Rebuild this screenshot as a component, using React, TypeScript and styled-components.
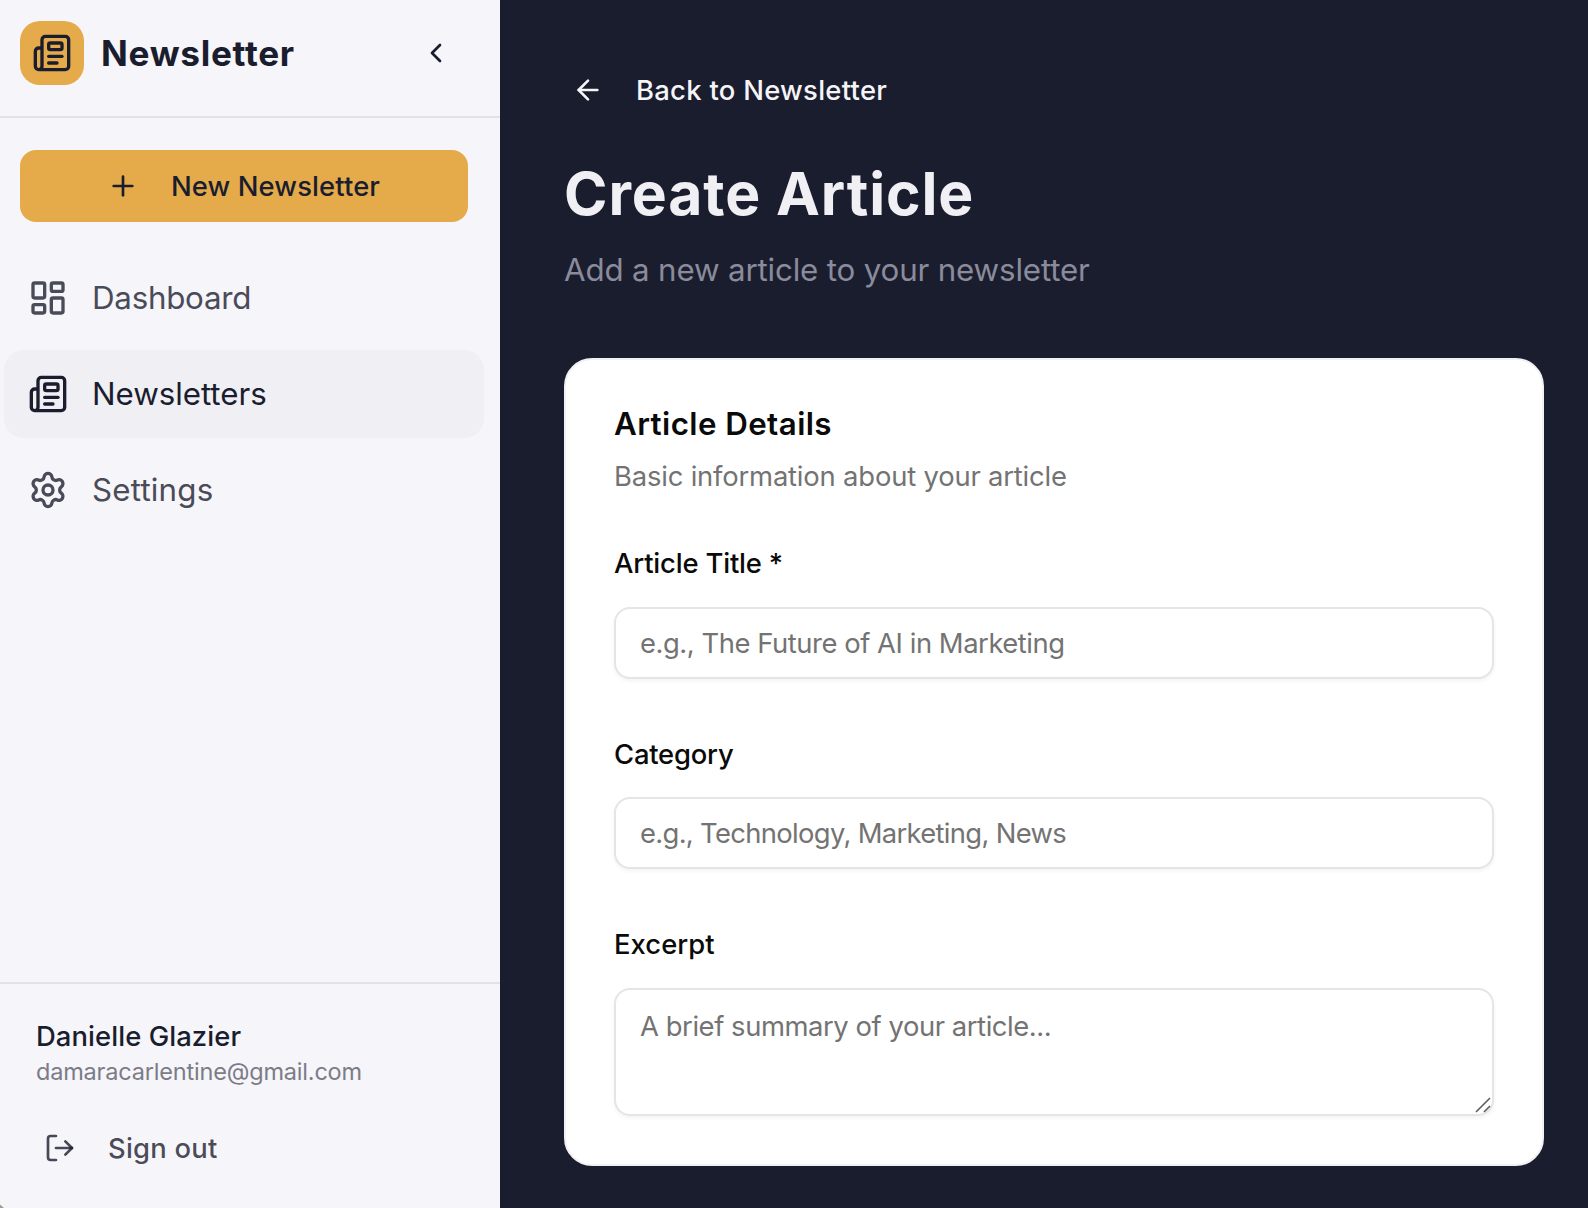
import React from 'react';
import styled, { createGlobalStyle } from 'styled-components';
import {
  ArrowLeft,
  ChevronLeft,
  LayoutDashboard,
  LogOut,
  Newspaper,
  Plus,
  Settings,
} from 'lucide-react';

const color = {
  navy: '#1a1d2e',
  gold: '#e5ab4a',
  sidebar: '#f6f5fa',
  active: '#f0eff4',
  line: '#e2e1e8',
  soft: 'rgba(26, 29, 46, 0.8)',
  faint: '#7b7c87',
};

const GlobalStyle = createGlobalStyle`
  *, *::before, *::after { box-sizing: border-box; }
  body {
    margin: 0;
    background: ${color.navy};
    font-family: Inter, "Liberation Sans", sans-serif;
    -webkit-font-smoothing: antialiased;
    overflow: hidden;
  }
  h1, h2, p { margin: 0; }
  button, input, textarea { font-family: inherit; }
`;

const Shell = styled.div`
  position: relative;
  display: flex;
  width: 1588px;
  height: 1208px;
  overflow: hidden;
  background: ${color.navy};
`;

const Sidebar = styled.aside`
  display: flex;
  flex-direction: column;
  flex: 0 0 500px;
  background: ${color.sidebar};
  color: ${color.navy};
`;

const SidebarHeader = styled.header`
  display: flex;
  align-items: center;
  height: 118px;
  padding: 21px 32px 31px 20px;
  border-bottom: 2px solid ${color.line};
`;

const Logo = styled.div`
  display: grid;
  place-items: center;
  width: 64px;
  height: 64px;
  border-radius: 20px;
  background: ${color.gold};
`;

const Brand = styled.span`
  flex: 1;
  margin-left: 17px;
  font-size: 35.2px;
  font-weight: 700;
  line-height: 56px;
  letter-spacing: 0.7px;
`;

const IconButton = styled.button`
  display: grid;
  place-items: center;
  width: 64px;
  height: 64px;
  padding: 0;
  border: 0;
  background: none;
  color: inherit;
`;

const NewButton = styled.button`
  display: flex;
  align-items: center;
  justify-content: center;
  gap: 32px;
  height: 72px;
  margin: 32px 32px 0 20px;
  padding: 0 1px 0 0;
  border: 0;
  border-radius: 16px;
  background: ${color.gold};
  color: ${color.navy};
  font-size: 27.4px;
  font-weight: 500;
  letter-spacing: 0.12px;
`;

const Nav = styled.nav`
  display: flex;
  flex-direction: column;
  flex: 1;
  gap: 8px;
  padding: 32px 16px 0 4px;
`;

const NavItem = styled.a<{ $active?: boolean; $track: number }>`
  display: flex;
  align-items: center;
  gap: 24px;
  height: 88px;
  padding: 0 24px;
  border-radius: 20px;
  background: ${(p) => (p.$active ? color.active : 'transparent')};
  color: ${(p) => (p.$active ? color.navy : '#4a4b58')};
  font-size: 31.3px;
  letter-spacing: ${(p) => p.$track}px;
`;

const Account = styled.footer`
  display: flex;
  flex-direction: column;
  height: 226px;
  padding: 32px 36px 0;
  border-top: 2px solid ${color.line};
`;

const AccountName = styled.p`
  font-size: 27.4px;
  font-weight: 500;
  line-height: 40px;
  letter-spacing: 0.08px;
`;

const AccountEmail = styled.p`
  color: ${color.faint};
  font-size: 23.5px;
  line-height: 32px;
  letter-spacing: -0.19px;
`;

const SignOut = styled.button`
  display: flex;
  align-items: center;
  gap: 32px;
  height: 64px;
  margin-top: 28px;
  padding: 0 8px;
  border: 0;
  background: none;
  color: ${color.soft};
  font-size: 27.4px;
  font-weight: 500;
  letter-spacing: 0.24px;
`;

const Main = styled.main`
  display: flex;
  flex-direction: column;
  flex: 1;
  padding: 54px 44px 0 64px;
`;

const BackLink = styled.a`
  display: flex;
  align-items: center;
  gap: 32px;
  height: 72px;
  padding-left: 8px;
  color: #f5f4f7;
  font-size: 27.4px;
  font-weight: 500;
  letter-spacing: 0.29px;
`;

const PageTitle = styled.h1`
  margin-top: 32px;
  color: #f0eff4;
  font-size: 58.8px;
  font-weight: 700;
  line-height: 72px;
  letter-spacing: 0.9px;
`;

const PageSubtitle = styled.p`
  margin-top: 16px;
  color: #8a8b9b;
  font-size: 31.3px;
  line-height: 48px;
  letter-spacing: -0.17px;
`;

const Card = styled.section`
  display: flex;
  flex-direction: column;
  margin-top: 64px;
  padding: 48px;
  border: 2px solid #f1f0f4;
  border-radius: 28px;
  background: #fff;
  color: #0a0a0a;
`;

const CardTitle = styled.h2`
  font-size: 31.3px;
  font-weight: 600;
  line-height: 32px;
  letter-spacing: 0.42px;
`;

const CardText = styled.p`
  margin: 16px 0 48px;
  color: #737373;
  font-size: 27.4px;
  line-height: 40px;
  letter-spacing: -0.18px;
`;

const Fields = styled.form`
  display: flex;
  flex-direction: column;
  gap: 56px;
`;

const Field = styled.div`
  position: relative;
  display: flex;
  flex-direction: column;
  gap: 24.6px;
`;

const Label = styled.label<{ $track: number }>`
  font-size: 27.4px;
  font-weight: 500;
  line-height: 38px;
  letter-spacing: ${(p) => p.$track}px;
`;

const Input = styled.input<{ $track: number }>`
  width: 100%;
  height: 72px;
  padding: 0 24px;
  border: 2px solid #e5e5e5;
  border-radius: 16px;
  outline: 0;
  background: #fff;
  box-shadow: 0 2px 4px rgba(0, 0, 0, 0.05);
  font-size: 27.4px;
  letter-spacing: ${(p) => p.$track}px;
  &::placeholder { color: #737373; opacity: 1; }
`;

const TextArea = styled.textarea`
  display: block;
  width: 100%;
  height: 128px;
  padding: 16px 24px;
  border: 2px solid #e5e5e5;
  border-radius: 16px;
  outline: 0;
  background: #fff;
  box-shadow: 0 2px 4px rgba(0, 0, 0, 0.05);
  font-size: 27.4px;
  line-height: 40px;
  letter-spacing: -0.43px;
  resize: none;
  &::placeholder { color: #737373; opacity: 1; }
`;

const ResizeGrip = styled.svg`
  position: absolute;
  right: 3px;
  bottom: 3px;
`;

const WindowCorner = styled.span`
  position: absolute;
  left: 0;
  bottom: 0;
  width: 4px;
  height: 4px;
  background: #9c9c9a;
  clip-path: polygon(0 15%, 100% 100%, 0 100%);
`;

export default function App() {
  return (
    <Shell>
      <GlobalStyle />
      <Sidebar>
        <SidebarHeader>
          <Logo><Newspaper size={40} /></Logo>
          <Brand>Newsletter</Brand>
          <IconButton aria-label="Collapse sidebar"><ChevronLeft size={32} /></IconButton>
        </SidebarHeader>
        <NewButton><Plus size={32} />New Newsletter</NewButton>
        <Nav>
          <NavItem $track={-0.25}><LayoutDashboard size={40} />Dashboard</NavItem>
          <NavItem $track={-0.05} $active><Newspaper size={40} />Newsletters</NavItem>
          <NavItem $track={0.2}><Settings size={40} />Settings</NavItem>
        </Nav>
        <Account>
          <AccountName>Danielle Glazier</AccountName>
          <AccountEmail>damaracarlentine@gmail.com</AccountEmail>
          <SignOut><LogOut size={32} />Sign out</SignOut>
        </Account>
      </Sidebar>
      <Main>
        <BackLink><ArrowLeft size={32} />Back to Newsletter</BackLink>
        <PageTitle>Create Article</PageTitle>
        <PageSubtitle>Add a new article to your newsletter</PageSubtitle>
        <Card>
          <CardTitle>Article Details</CardTitle>
          <CardText>Basic information about your article</CardText>
          <Fields>
            <Field>
              <Label htmlFor="title" $track={-0.17}>Article Title *</Label>
              <Input id="title" $track={-0.45} placeholder="e.g., The Future of AI in Marketing" />
            </Field>
            <Field>
              <Label htmlFor="category" $track={-0.2}>Category</Label>
              <Input id="category" $track={-0.67} placeholder="e.g., Technology, Marketing, News" />
            </Field>
            <Field>
              <Label htmlFor="excerpt" $track={0.05}>Excerpt</Label>
              <TextArea id="excerpt" placeholder="A brief summary of your article..." />
              <ResizeGrip width="16" height="16" viewBox="0 0 16 16" fill="none" stroke="#5f5f5f" strokeWidth="1.6">
                <path d="M1 15 15 1M9 15l6-6" />
              </ResizeGrip>
            </Field>
          </Fields>
        </Card>
      </Main>
      <WindowCorner />
    </Shell>
  );
}
